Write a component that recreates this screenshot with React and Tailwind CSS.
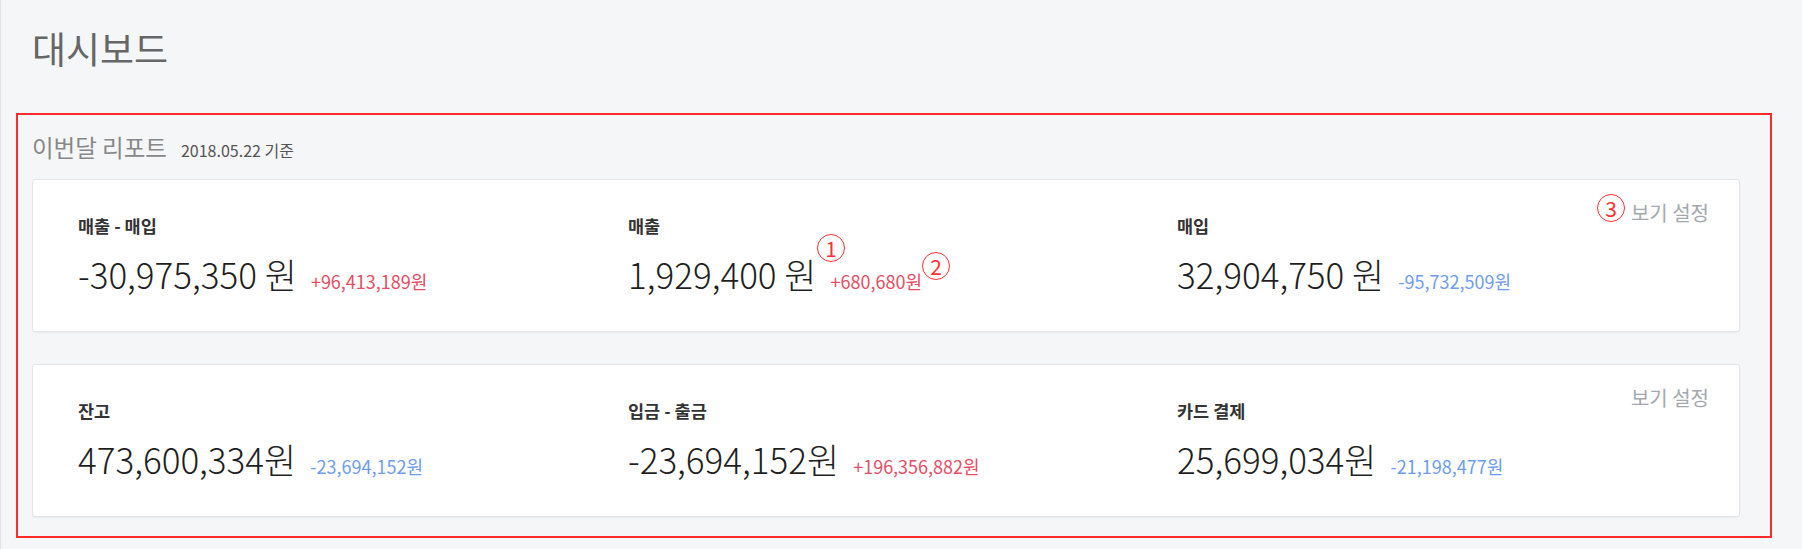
import React from 'react';

const FONT = { fontFamily: '"Noto Sans CJK KR", "Noto Sans", sans-serif' };

const Marker = ({ n, className }) => (
  <span
    className={`absolute flex h-[28px] w-[28px] items-center justify-center rounded-full border-[1.5px] border-[#ff3030] text-[21px] leading-none text-[#ff3030] ${className}`}
  >
    {n}
  </span>
);

const Stat = ({ label, value, delta, up }) => (
  <div className="relative">
    <p className="text-[17.5px] font-bold leading-[24px] text-[#333]">{label}</p>
    <div className="mt-[14px] flex items-baseline">
      <span className="text-[35px] font-light leading-[44px] text-[#1f1f1f]">{value}</span>
      <span className={`ml-[14px] text-[18px] ${up ? 'text-[#e64d64]' : 'text-[#6e9cf0]'}`}>{delta}</span>
    </div>
  </div>
);

const ReportCard = ({ stats, markers }) => (
  <section className="relative h-[153px] rounded-[3px] border border-[#e3e4e7] bg-white shadow-[0_1px_1px_rgba(0,0,0,0.04)]">
    <div className="grid grid-cols-[550px_549px_1fr] pl-[45px] pt-[34px]">
      {stats.map((s) => (
        <Stat key={s.label} {...s} />
      ))}
    </div>
    <span className="absolute right-[30px] top-[19px] text-[20px] leading-[28px] text-[#a4a8ae]">보기 설정</span>
    {markers}
  </section>
);

export default function App() {
  return (
    <div style={FONT} className="h-[549px] w-full overflow-hidden border-l border-[#e2e3e6] bg-[#f5f6f8] px-[15px]">
      <h1 className="pl-[16px] pt-[24px] text-[37px] font-normal leading-[48px] text-[#666]">대시보드</h1>

      <div className="mt-[41px] w-[1756px] border-2 border-[#ff2b2b] pb-[19px] pl-[14px] pr-[30px]">
        <div className="flex items-baseline gap-[14px] pt-[18px]">
          <h2 className="text-[23.5px] leading-[28px] text-[#888]">이번달 리포트</h2>
          <span className="text-[16px] leading-[28px] text-[#555]">2018.05.22 기준</span>
        </div>

        <div className="mt-[15px] flex flex-col gap-[32px]">
          <ReportCard
            stats={[
              { label: '매출 - 매입', value: '-30,975,350 원', delta: '+96,413,189원', up: true },
              { label: '매출', value: '1,929,400 원', delta: '+680,680원', up: true },
              { label: '매입', value: '32,904,750 원', delta: '-95,732,509원', up: false },
            ]}
            markers={
              <>
                <Marker n="1" className="left-[784px] top-[54px]" />
                <Marker n="2" className="left-[889px] top-[72px]" />
                <Marker n="3" className="left-[1564px] top-[14px]" />
              </>
            }
          />
          <ReportCard
            stats={[
              { label: '잔고', value: '473,600,334원', delta: '-23,694,152원', up: false },
              { label: '입금 - 출금', value: '-23,694,152원', delta: '+196,356,882원', up: true },
              { label: '카드 결제', value: '25,699,034원', delta: '-21,198,477원', up: false },
            ]}
          />
        </div>
      </div>
    </div>
  );
}
